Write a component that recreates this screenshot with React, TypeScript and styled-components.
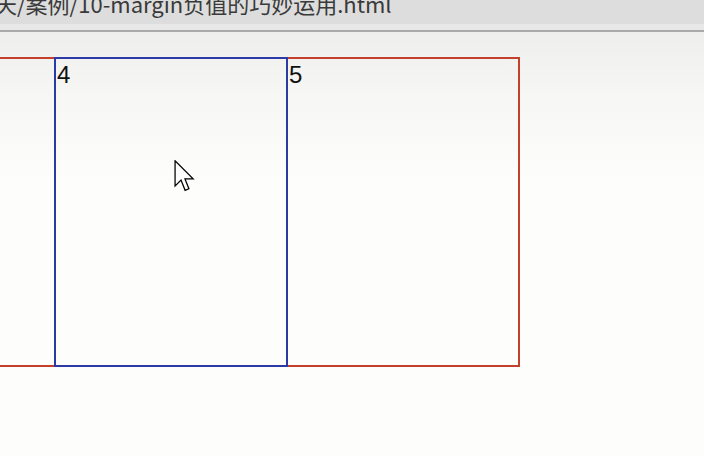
import React from "react";
import styled, { createGlobalStyle } from "styled-components";

const Global = createGlobalStyle`
  html, body { margin: 0; padding: 0; }
  body {
    width: 704px;
    height: 456px;
    overflow: hidden;
    font-family: "Liberation Sans", "Noto Sans CJK SC", sans-serif;
    background: #fdfdfc;
  }
`;

const Screen = styled.div`
  position: relative;
  width: 704px;
  height: 456px;
  overflow: hidden;
  display: flex;
  flex-direction: column;
`;

const TitleBar = styled.div`
  height: 24px;
  background: #dcdddc;
  overflow: hidden;
  display: flex;
  align-items: flex-end;
`;

const TitleText = styled.div`
  font-family: "Noto Sans CJK SC", "Liberation Sans", sans-serif;
  font-size: 22px;
  line-height: 22px;
  color: #3a3a3a;
  white-space: nowrap;
  margin: 0 0 10px -5px;
`;

const SubStrip = styled.div`
  height: 6px;
  background: #e7e8e7;
`;

const Rule = styled.div`
  height: 2px;
  background: #a9a9a9;
`;

const Page = styled.div`
  flex: 1;
  background: linear-gradient(#eeeeed 0px, #f6f6f5 60px, #fdfdfc 150px, #fdfdfc 100%);
  padding-top: 25px;
`;

const Row = styled.div`
  display: flex;
  margin-left: -178px;
`;

const Box = styled.div<{ $tone: "red" | "blue" }>`
  box-sizing: border-box;
  flex: 0 0 234px;
  height: 310px;
  border: 2px solid ${(p) => (p.$tone === "blue" ? "#2b3aa6" : "#c4402c")};
  margin-left: -2px;
  position: relative;
  z-index: ${(p) => (p.$tone === "blue" ? 1 : 0)};
  font-family: "Liberation Sans", sans-serif;
  font-size: 24px;
  line-height: 32px;
  color: #111;
  padding-left: 1px;
  &:first-child { margin-left: 0; }
`;

const Cursor = styled.svg`
  position: absolute;
  left: 174px;
  top: 160px;
  width: 21px;
  height: 33px;
`;

export default function App() {
  return (
    <>
      <Global />
      <Screen>
        <TitleBar>
          <TitleText>天/案例/10-margin负值的巧妙运用.html</TitleText>
        </TitleBar>
        <SubStrip />
        <Rule />
        <Page>
          <Row>
            <Box $tone="red" />
            <Box $tone="blue">4</Box>
            <Box $tone="red">5</Box>
          </Row>
        </Page>
        <Cursor viewBox="0 0 13 21">
          <path
            d="M0.5 0.5 V16.5 L4.3 12.8 L6.9 19.3 L9.3 18.3 L6.8 12 H12 Z"
            fill="#ffffff"
            stroke="#000000"
            strokeWidth="0.8"
            strokeLinejoin="miter"
          />
        </Cursor>
      </Screen>
    </>
  );
}
